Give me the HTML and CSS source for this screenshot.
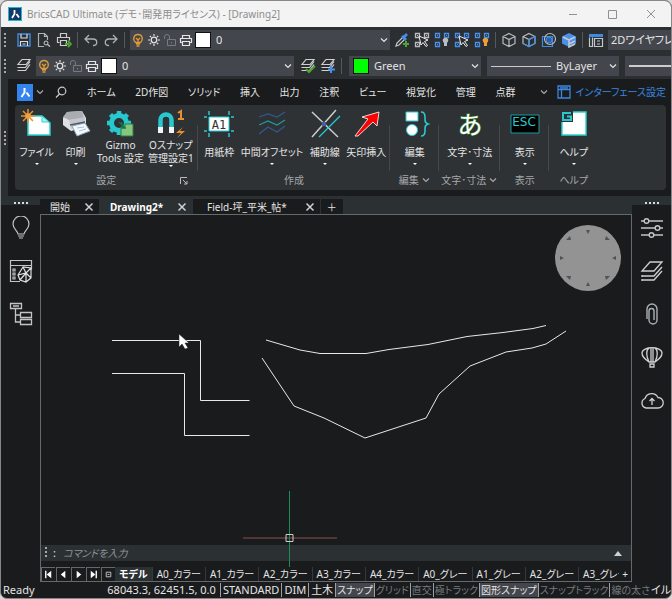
FILE: index.html
```html
<!DOCTYPE html>
<html lang="ja">
<head>
  <meta charset="UTF-8" />
  <meta name="viewport" content="width=device-width, initial-scale=1.0"/>
  <title>BricsCAD Ultimate</title>
  <link rel="stylesheet" href="styles.css">
</head>
<body>
  <!-- 共通アイコン -->
  <svg class="defs" aria-hidden="true">
    <symbol id="i-bulb" viewBox="0 0 14 14"><path d="M4.5 9.5C1 6 3 1.5 7 1.5s6 4.500 2.500 8zM5 11h4M5.500 13h3M5 5l2 2 2-2M7 7v3" fill="none" stroke="#dd9a35" stroke-width="1.300"/></symbol>
    <symbol id="i-sun" viewBox="0 0 14 14"><circle cx="7" cy="7" r="2.800" fill="none" stroke="#e0e0e0" stroke-width="1.300"/><path d="M7 1v2M7 11v2M1 7h2M11 7h2M2.800 2.800l1.300 1.300M9.900 9.900l1.300 1.300M11.200 2.800L9.900 4.100M4.100 9.900l-1.300 1.300" stroke="#e0e0e0" stroke-width="1.200"/></symbol>
    <symbol id="i-lock" viewBox="0 0 14 14"><path d="M4.500 6.500h8v6h-8zM1.500 6V4a2.500 2.500 0 0 1 5 0v2.500M8.500 9v1.500" fill="none" stroke="#777b80"/></symbol>
    <symbol id="i-print" viewBox="0 0 14 14"><path d="M3.500 5V2.500h7V5M3 9.500H1.500v-4h11v4H11M3.500 8.500h7v4h-7z" fill="none" stroke="#e4e4e4" stroke-width="1.200"/></symbol>
    <symbol id="i-chev" viewBox="0 0 10 10"><path d="M2 3.500l3 3 3-3" fill="none" stroke="currentColor" stroke-width="1.200"/></symbol>
    <symbol id="i-close" viewBox="0 0 10 10"><path d="M1.500 1.500l7 7M8.500 1.500l-7 7" fill="none" stroke="#ccd2d8" stroke-width="1.500"/></symbol>
    <symbol id="i-layers" viewBox="0 0 16 16"><path d="M6 1.500h8l-4 5H2zM1.500 9.500h8l4.500-6M1.500 12.500h8l4.500-6" fill="none" stroke="#d0d0d0" stroke-width="1.200"/></symbol>
    <symbol id="i-cube" viewBox="0 0 16 16"><path d="M8 1.500l6 3v7l-6 3-6-3v-7zM2 4.500l6 3 6-3M8 7.500v7" fill="none" stroke="#b9bcc0" stroke-width="1.200"/></symbol>
    <symbol id="i-boxes" viewBox="0 0 16 16"><path d="M1.500 1.500h4v4h-4zM10.500 1.500h4v4h-4zM1.500 10.500h4v4h-4z" fill="none" stroke="currentColor" stroke-width="1.300"/><path d="M3 3h1v1H3zM12 3h1v1h-1zM3 12h1v1H3z" fill="currentColor"/></symbol>
    <symbol id="i-arrow" viewBox="0 0 16 16"><path d="M5 4l9 4-3.500 1.500 3 4-1.500 1-3-4L7 13z" fill="#2b2f32" stroke="#eee"/></symbol>
  </svg>

  <div class="window">
    <!-- タイトルバー -->
    <header class="titlebar">
      <svg class="app-icon" width="14" height="14" viewBox="0 0 14 14"><path d="M0 0h14v14H0z" fill="#123a66"/><path d="M0 0h14v14H0z" fill="none" stroke="#25b4d8" stroke-width="2"/><path d="M6.500 3v4L4 11M8.500 7l2.500 3.500" fill="none" stroke="#fff" stroke-width="1.800"/></svg>
      <h1>BricsCAD Ultimate (デモ･開発用ライセンス) - [Drawing2]</h1>
      <div class="window-buttons">
        <button aria-label="最小化"><svg width="10" height="10"><path d="M1 5.500h8" stroke="#909090"/></svg></button>
        <button aria-label="最大化"><svg width="10" height="10"><path d="M1.500 1.500h8v8h-8z" fill="none" stroke="#909090"/></svg></button>
        <button aria-label="閉じる"><svg width="10" height="10"><path d="M1 1l8 8M9 1l-8 8" stroke="#909090"/></svg></button>
      </div>
    </header>

    <!-- ツールバー 1段目 -->
    <div class="toolbar">
      <span class="grip"></span>
      <button aria-label="保存"><svg viewBox="0 0 16 16"><path d="M2 2h12v12H2z" fill="none" stroke="#3f8be0" stroke-width="1.400"/><path d="M5 2v4h6V2M4.500 14V9.500h7V14M6.500 12h3" fill="none" stroke="#ddd" stroke-width="1.200"/></svg></button>
      <button aria-label="印刷プレビュー"><svg viewBox="0 0 16 16"><path d="M8 14.500H2.500v-13h6l3 3V8M8.500 1.500v3h3" fill="none" stroke="#aeb1b4" stroke-width="1.200"/><circle cx="10" cy="11" r="2" fill="none" stroke="#ccc"/><path d="M11.500 12.500l2.500 2" stroke="#ccc" stroke-width="1.300"/></svg></button>
      <button aria-label="印刷"><svg viewBox="0 0 16 16"><path d="M4.500 6V1.500h6V6M3.500 10.500h-2v-5h12v3M4.500 8.500h6v5h-6z" fill="none" stroke="#ccc" stroke-width="1.200"/><path d="M9 12h4M12 9l3 3-3 3" fill="none" stroke="#4ea72c" stroke-width="1.800"/></svg></button>
      <span class="sep"></span>
      <button aria-label="元に戻す"><svg viewBox="0 0 16 16"><path d="M6 3L2 7l4 4M2 7h8c5 0 5 6.500 0 6.500" fill="none" stroke="#aeb1b4" stroke-width="1.300"/></svg></button>
      <button aria-label="やり直し"><svg viewBox="0 0 16 16"><path d="M10 3l4 4-4 4M14 7H6c-5 0-5 6.500 0 6.500" fill="none" stroke="#aeb1b4" stroke-width="1.300"/></svg></button>
      <span class="sep"></span>
      <div class="combo layer">
        <svg><use href="#i-bulb"/></svg><svg><use href="#i-sun"/></svg><svg><use href="#i-lock"/></svg><svg><use href="#i-print"/></svg>
        <span class="swatch"></span>
        <select aria-label="画層"><option>0</option></select>
        <svg class="chev"><use href="#i-chev"/></svg>
      </div>
      <button aria-label="プロパティコピー"><svg viewBox="0 0 16 16"><path d="M2 14l1-3 6-6 2 2-6 6z" fill="none" stroke="#c4c7ca" stroke-width="1.200"/><path d="M8 4l4 4M10 5l3-3" stroke="#4a90e8" stroke-width="2.600"/><path d="M12 9v6M9 12h6" stroke="#4ea72c" stroke-width="2"/></svg></button>
      <button aria-label="選択"><svg class="gray" viewBox="0 0 16 16"><use href="#i-boxes"/><use href="#i-arrow"/></svg></button>
      <button aria-label="選択を非表示"><svg class="blue" viewBox="0 0 16 16"><use href="#i-boxes"/><path d="M10 11C7.500 8 9 6 11.500 6S15.500 8 13 11v3h-3z" fill="#b9bcc0"/></svg></button>
      <button aria-label="選択を分離"><svg class="blue" viewBox="0 0 16 16"><use href="#i-boxes"/><use href="#i-arrow"/></svg></button>
      <button aria-label="すべて表示"><svg class="blue" viewBox="0 0 16 16"><use href="#i-boxes"/><path d="M10 11C7.500 8 9 6 11.500 6S15.500 8 13 11v3h-3z" fill="#e8a03a"/></svg></button>
      <span class="sep"></span>
      <button aria-label="ワイヤフレーム"><svg><use href="#i-cube"/></svg></button>
      <button aria-label="隠線"><svg viewBox="0 0 16 16"><use href="#i-cube"/><path d="M8 14.500l6-3v-7l-6 3zM2 11.500l6 3" fill="none" stroke="#3f8be0" stroke-width="1.200"/></svg></button>
      <button aria-label="X線"><svg viewBox="0 0 16 16"><path d="M1.500 4.500h10v10h-10z" fill="none" stroke="#3f8be0" stroke-width="1.200"/><circle cx="9" cy="7" r="5.500" fill="none" stroke="#b9bcc0" stroke-width="1.200"/><circle cx="8" cy="8" r="3" fill="#2c5fa8" stroke="#4a90e8"/></svg></button>
      <button aria-label="シェーディング"><svg viewBox="0 0 16 16"><path d="M8 1l7 3.500v7L8 15l-7-3.500v-7z" fill="#4a90e8"/><path d="M2 5l6 3 6-3M8 12l6-3M8 8v7l6-3" fill="none" stroke="#c0c8d0" stroke-width="1.600"/></svg></button>
      <span class="sep"></span>
      <button aria-label="パネル"><svg viewBox="0 0 16 16"><path d="M1 2h14v3H1z" fill="#3f8be0"/><path d="M1.500 5.500v9h3v-9M6.500 6.500h8v8h-8zM9 9h3M9 12h3" fill="none" stroke="#c4c7ca" stroke-width="1.200"/></svg></button>
      <div class="combo style"><select aria-label="表示スタイル"><option>2Dワイヤフレーム</option></select></div>
    </div>

    <!-- ツールバー 2段目 -->
    <div class="toolbar">
      <span class="grip"></span>
      <button aria-label="画層管理"><svg><use href="#i-layers"/></svg></button>
      <div class="combo layer">
        <svg><use href="#i-bulb"/></svg><svg><use href="#i-sun"/></svg><svg><use href="#i-lock"/></svg><svg><use href="#i-print"/></svg>
        <span class="swatch"></span>
        <select aria-label="現在の画層"><option>0</option></select>
        <svg class="chev"><use href="#i-chev"/></svg>
      </div>
      <button class="first" aria-label="現在画層に設定"><svg viewBox="0 0 16 16"><use href="#i-layers"/><path d="M6 11l3 3 6-6" fill="none" stroke="#4ea72c" stroke-width="2"/></svg></button>
      <button aria-label="画層追加"><svg viewBox="0 0 16 16"><use href="#i-layers"/><path d="M11 8v7M8 11.500h7" stroke="#4a90e8" stroke-width="2"/></svg></button>
      <span class="sep"></span>
      <div class="combo property">
        <span class="swatch green"></span>
        <select aria-label="色"><option>Green</option></select>
        <svg class="chev"><use href="#i-chev"/></svg>
      </div>
      <div class="combo property">
        <span class="line"></span>
        <select class="linetype" aria-label="線種"><option>ByLayer</option></select>
        <svg class="chev"><use href="#i-chev"/></svg>
      </div>
      <div class="combo weight"><span class="line thick"></span></div>
    </div>

    <!-- リボン -->
    <div class="ribbon">
      <div class="ribbon-grip"><span class="grip"></span></div>
      <div class="ribbon-body">
        <nav class="ribbon-tabs">
          <button class="logo" aria-label="BricsCAD"><svg width="16" height="17" viewBox="0 0 16 17"><path d="M7.500 4v4.500L4.500 13M9.500 8.500l3 4" fill="none" stroke="#fff" stroke-width="2"/></svg></button>
          <button class="more" aria-label="メニュー"><svg width="10" height="10"><use href="#i-chev"/></svg></button>
          <button class="search" aria-label="検索"><svg width="12" height="12" viewBox="0 0 12 12"><circle cx="7" cy="5" r="3.800" fill="none" stroke="#ccc" stroke-width="1.200"/><path d="M4.500 8L1 11.500" stroke="#ccc" stroke-width="1.200"/></svg></button>
          <div class="tab-list">
            <a href="#">ホーム</a>
            <a href="#">2D作図</a>
            <a href="#">ソリッド</a>
            <a href="#">挿入</a>
            <a href="#">出力</a>
            <a href="#">注釈</a>
            <a href="#">ビュー</a>
            <a href="#">視覚化</a>
            <a href="#">管理</a>
            <a href="#">点群</a>
          </div>
          <button class="more" aria-label="その他のタブ"><svg width="10" height="10"><use href="#i-chev"/></svg></button>
          <a class="interface" href="#"><svg width="14" height="14" viewBox="0 0 14 14"><path d="M1 1h12v12H1zM1 4.500h12M4.500 4.500V13M3 2.800h8" fill="none" stroke="#3b86e0" stroke-width="1.300"/></svg>インターフェース設定</a>
        </nav>
        <div class="panels">
          <section class="panel">
            <div class="tools">
              <button><svg viewBox="0 0 32 30"><path d="M7 7h14l8 7v12H7z" fill="#fff" stroke="#27d3d0" stroke-width="1.500"/><path d="M21 7v6h7z" fill="#b9eef0" stroke="#27d3d0"/><path d="M7 0v4M7 10v4M0 7h4M10 7h4M2 2l3 3M9 9l3 3M12 2L9 5M5 9l-3 3" stroke="#e8902f" stroke-width="1.500"/><circle cx="7" cy="7" r="3" fill="#f0a03c"/></svg><span>ファイル</span><i class="drop"></i></button>
              <button><svg viewBox="0 0 32 30"><path d="M7 3l15-1 4 7v9l-15 4-8-6V9z" fill="#dfe0e4"/><path d="M7 3l15-1 2 7-15 2-6-3z" fill="#a9acb3"/><path d="M9 11l16-3v8l-14 4z" fill="#c5c7ce"/><path d="M12 17l13-3 5 8-13 5z" fill="#f4f8fb" stroke="#8ea2b8"/><path d="M10 16l15-3" stroke="#555b66" stroke-width="1.500"/><path d="M17 19l7-1M19 22l7-2" stroke="#9ec5e6"/></svg><span>印刷</span><i class="drop"></i></button>
              <button class="two-line"><svg viewBox="0 0 32 30"><circle cx="15" cy="14" r="7.500" fill="none" stroke="#27c9cf" stroke-width="5"/><path d="M15 2v4M15 22v4M3 14h4M23 14h4M6.500 5.500l3 3M20.500 19.500l3 3M23.500 5.500l-3 3M6.500 22.500l3-3" stroke="#27c9cf" stroke-width="4.500"/><path d="M17 27V18h4v-3h8v12z" fill="#86c77f" stroke="#337a3c"/><path d="M15 13l6 6M18 13v6h4" fill="none" stroke="#174" stroke-width="1.300"/></svg><span>Gizmo<br>Tools 設定</span></button>
              <button class="two-line"><svg viewBox="0 0 32 30"><path d="M5.500 23V11a5.500 5.500 0 0 1 11 0v12" fill="none" stroke="#27c9cf" stroke-width="4.500"/><path d="M3 18h5v6H3zM14 18h5v6h-5z" fill="#f4f4f4"/><path d="M23 4l3-2v8M23 10h6" fill="none" stroke="#e8902f" stroke-width="2"/><path d="M28 18l-7 6h5l-4 5 8-7h-5z" fill="#e8902f"/></svg><span>Oスナップ<br>管理設定1</span><i class="drop"></i></button>
            </div>
            <h2>設定<svg class="launcher" width="9" height="9" viewBox="0 0 9 9"><path d="M1.500 8V1.500H8M4 4l4 4M8 5v3H5" fill="none" stroke="#bbb"/></svg></h2>
          </section>
          <section class="panel">
            <div class="tools">
              <button><svg viewBox="0 0 32 30"><path d="M6 8h20v14H6z" fill="#fff" stroke="#27c9cf"/><path d="M6 2v4M26 2v4M6 24v4M26 24v4M1 8h3M28 8h3M1 22h3M28 22h3" stroke="#27c9cf" stroke-width="1.500"/><text x="16" y="20" text-anchor="middle" class="a1">A1</text></svg><span>用紙枠</span></button>
              <button><svg viewBox="0 0 32 30"><path d="M3 8l9-3 9 3 8-5" fill="none" stroke="#35578f" stroke-width="1.200"/><path d="M3 16l9-4 9 4 8-5" fill="none" stroke="#1f9aa0" stroke-width="1.200"/><path d="M3 25l9-7 9 5 8-6" fill="none" stroke="#35578f" stroke-width="1.200"/></svg><span>中間オフセット</span><i class="drop"></i></button>
              <button><svg viewBox="0 0 32 30"><path d="M3 3l26 25M27 1L3 28" stroke="#ccc" stroke-width="1.500"/><path d="M31 7L10 28" stroke="#27c9cf" stroke-width="1.200"/><path d="M13 13h4v4h-4z" fill="#3f63a8"/></svg><span>補助線</span><i class="drop"></i></button>
              <button><svg viewBox="0 0 32 30"><path d="M5 27L18 10l-6-2 17-5-2 14-4-4L8 27z" fill="#f00" stroke="#ddd"/></svg><span>矢印挿入</span></button>
            </div>
            <h2>作成</h2>
          </section>
          <section class="panel">
            <div class="tools">
              <button><svg viewBox="0 0 32 30"><path d="M7 3h12v9H7z" fill="#fff" stroke="#27c9cf"/><circle cx="13" cy="21" r="5.500" fill="#fff" stroke="#27c9cf"/><path d="M22 3q4 0 4 5v3q0 3 3 4-3 1-3 4v3q0 5-4 5" fill="none" stroke="#27c9cf" stroke-width="1.600"/></svg><span>編集</span><i class="drop"></i></button>
            </div>
            <h2>編集<svg width="10" height="10"><use href="#i-chev"/></svg></h2>
          </section>
          <section class="panel">
            <div class="tools">
              <button><svg viewBox="0 0 32 30"><text x="16" y="25" text-anchor="middle" class="kana">あ</text></svg><span>文字･寸法</span><i class="drop"></i></button>
            </div>
            <h2>文字･寸法<svg width="10" height="10"><use href="#i-chev"/></svg></h2>
          </section>
          <section class="panel">
            <div class="tools">
              <button><svg viewBox="0 0 32 30"><path d="M2 6h28v18H2z" fill="#000" stroke="#1c9a9e"/><text x="15" y="17" text-anchor="middle" class="esc">ESC</text></svg><span>表示</span><i class="drop"></i></button>
            </div>
            <h2>表示</h2>
          </section>
          <section class="panel">
            <div class="tools">
              <button><svg viewBox="0 0 32 30"><path d="M4 3h24v23H4z" fill="#fff" stroke="#27d3d0" stroke-width="1.400"/><path d="M3 2h12v11H3z" fill="#2e3235"/><path d="M13 4H5v7h8V7.500H9" fill="none" stroke="#27c9cf" stroke-width="2"/></svg><span>ヘルプ</span><i class="drop"></i></button>
            </div>
            <h2>ヘルプ</h2>
          </section>
        </div>
      </div>
    </div>

    <!-- 作図エリア -->
    <div class="workspace">
      <aside class="dock left">
        <span class="dock-grip"></span>
        <button aria-label="ヒント"><svg viewBox="0 0 24 24"><path d="M9 18c0-3-5-5-5-10a8 8 0 0 1 16 0c0 5-5 7-5 10zM9 20h6M10 22h4" fill="none" stroke="#c4c4c4" stroke-width="1.200"/></svg></button>
        <button aria-label="コンテンツ"><svg viewBox="0 0 24 24"><path d="M11 22.500H1.500v-21h21v9M1.500 6.500h21M4 10h2v2H4zM4 14h2v2H4zM4 18h2v2H4z" fill="none" stroke="#c4c4c4" stroke-width="1.200"/><path d="M14 8l-5 8 2 5 6 2 5-4V9zM14 8l3 6 5-5M9 16l8-2 5 5M17 14v9M11 21l6-7" fill="none" stroke="#e0e0e0" stroke-width="1.200"/></svg></button>
        <button aria-label="構造"><svg viewBox="0 0 24 24"><path d="M1.500 1.500h11v5h-11zM11.500 10.500h11v5h-11zM11.500 17.500h11v5h-11zM6.500 7v13h5M6.500 13h5M4 4h6" fill="none" stroke="#c4c4c4" stroke-width="1.300"/></svg></button>
      </aside>

      <main class="document">
        <div class="doc-tabs">
          <div class="doc-tab"><a href="#">開始</a><button aria-label="開始を閉じる"><svg><use href="#i-close"/></svg></button></div>
          <div class="doc-tab active"><a href="#">Drawing2*</a><button aria-label="Drawing2を閉じる"><svg><use href="#i-close"/></svg></button></div>
          <div class="doc-tab field"><a href="#">Field-坪_平米_帖*</a><button aria-label="Fieldを閉じる"><svg><use href="#i-close"/></svg></button></div>
          <button class="add" aria-label="新規">＋</button>
        </div>
        <div class="canvas">
          <svg class="drawing">
            <g fill="none" stroke="#e8e8e8">
              <path d="M71 125.500h88.500v60h49M71 158.500h72.500v62h65"/>
              <path d="M225 125l34 10 20 3.500h46l23-4 39-5 39-8 36-4 30-4 13-3"/>
              <path d="M221 143l32 48 30 12 41 20 61-20 13-24 31-28 36-14 26-4 14-4 20-13"/>
            </g>
            <path d="M202 323h94" stroke="#8f5050"/>
            <path d="M248.500 276v76" stroke="#1f8a5c"/>
            <path d="M245 319.500h7v7h-7z" fill="none" stroke="#ccc"/>
            <path d="M138 119v13l3-3 3 5 3-1-3-5h4z" fill="#fff" stroke="#222" stroke-width="0.500"/>
          </svg>
          <svg class="look-from" viewBox="0 0 68 68">
            <circle cx="34" cy="34" r="33" fill="#939393"/>
            <g fill="#505256">
              <path d="M32 6h4l-2 4zM32 62h4l-2-4zM6 32v4l4-2zM62 32v4l-4-2z"/>
              <path d="M12 16h5l-1-4zM56 16h-5l1-4zM12 52h5l-1 4zM56 52h-5l1 4z"/>
            </g>
          </svg>
        </div>
        <div class="command">
          <span class="grip"></span><label for="cmd">:</label>
          <input id="cmd" type="text" placeholder="コマンドを入力">
          <button aria-label="履歴"><svg width="8" height="5" viewBox="0 0 8 5"><path d="M0 5l4-5 4 5z" fill="#d0d0d0"/></svg></button>
        </div>
        <div class="sheets">
          <div class="sheet-nav">
            <button aria-label="最初"><svg viewBox="0 0 12 12"><path d="M3 2v8" stroke="#fff" stroke-width="1.500"/><path d="M9 2v8L4 6z" fill="#fff"/></svg></button>
            <button aria-label="前"><svg viewBox="0 0 12 12"><path d="M8 2v8L3 6z" fill="#fff"/></svg></button>
            <button aria-label="次"><svg viewBox="0 0 12 12"><path d="M4 2v8l5-4z" fill="#fff"/></svg></button>
            <button aria-label="最後"><svg viewBox="0 0 12 12"><path d="M9 2v8" stroke="#fff" stroke-width="1.500"/><path d="M3 2v8l5-4z" fill="#fff"/></svg></button>
            <button aria-label="一覧"><svg viewBox="0 0 12 12"><path d="M3.500 3.500h5v5h-5zM5 6h2" fill="none" stroke="#ccc"/></svg></button>
          </div>
          <div class="sheet-list">
            <a class="active" href="#">モデル</a>
            <a href="#">A0_カラー</a>
            <a href="#">A1_カラー</a>
            <a href="#">A2_カラー</a>
            <a href="#">A3_カラー</a>
            <a href="#">A4_カラー</a>
            <a href="#">A0_グレー</a>
            <a href="#">A1_グレー</a>
            <a href="#">A2_グレー</a>
            <a href="#">A3_グレー</a>
          </div>
          <button class="add-sheet" aria-label="レイアウト追加">+</button>
        </div>
      </main>

      <aside class="dock right">
        <span class="dock-grip"></span>
        <button aria-label="プロパティ"><svg viewBox="0 0 24 24"><path d="M1 5h3M9 5h14M1 12h14M20 12h3M1 19h8M14 19h9" stroke="#c4c4c4" stroke-width="1.400"/><g fill="none" stroke="#c4c4c4" stroke-width="1.400"><circle cx="6.500" cy="5" r="2.300"/><circle cx="17.500" cy="12" r="2.300"/><circle cx="11.500" cy="19" r="2.300"/></g></svg></button>
        <button aria-label="画層"><svg viewBox="0 0 24 24"><path d="M10 3h12l-8 9H2zM2 17h12l8-9M2 21h12l8-9M2 16v2M2 20v2" fill="none" stroke="#d0d0d0" stroke-width="1.300"/></svg></button>
        <button aria-label="添付"><svg viewBox="0 0 24 24"><path d="M7 17V7a5 5 0 0 1 10 0v11a4 4 0 0 1-8 0V9a2.500 2.500 0 0 1 5 0v9" fill="none" stroke="#a9b0b6" stroke-width="1.400"/></svg></button>
        <button aria-label="バルーン"><svg viewBox="0 0 24 24"><path d="M9 17C5 14 2 12 2 8c0-7 20-7 20 0 0 4-3 6-7 9zM9 17C6 11 6 5 9 3M15 17c3-6 3-12 0-14M11 17V3M13 17V3M10 19h4v3h-4z" fill="none" stroke="#d0d0d0" stroke-width="1.300"/></svg></button>
        <button aria-label="クラウド"><svg viewBox="0 0 24 24"><path d="M6 20a5 5 0 0 1-1-9.500 7 7 0 0 1 13-1A5.200 5.200 0 0 1 18 20zM12 17v-6M9.500 13l2.500-2.500 2.500 2.500" fill="none" stroke="#d0d0d0" stroke-width="1.300"/></svg></button>
      </aside>
    </div>

    <!-- ステータスバー -->
    <footer class="status">
      <span class="ready">Ready</span>
      <span class="coords">68043.3, 62451.5, 0.0</span>
      <button>STANDARD</button>
      <button>DIM</button>
      <button>土木</button>
      <button class="on">スナップ</button>
      <button class="off">グリッド</button>
      <button class="off">直交</button>
      <button class="off">極トラック</button>
      <button class="on">図形スナップ</button>
      <button class="off">スナップトラック</button>
      <button class="off">線の太さ</button>
      <span class="tile">イル</span>
    </footer>
  </div>
</body>
</html>
```

FILE: styles.css
```css
* {
  box-sizing: border-box;
}
body {
  margin: 0;
  background: #d8d8d8;
  color: #e4e4e4;
  font-family: "Noto Sans", "Noto Sans CJK JP", sans-serif;
  font-size: 11px;
  line-height: 14px;
  font-feature-settings: "palt";
}
button, select, input {
  font: inherit;
  color: inherit;
  background: none;
  border: 0;
  padding: 0;
  margin: 0;
  font-feature-settings: inherit;
}
a {
  color: inherit;
  text-decoration: none;
  white-space: nowrap;
}
svg {
  flex-shrink: 0;
}
.defs {
  position: absolute;
  width: 0;
  height: 0;
}
.window {
  display: flex;
  flex-direction: column;
  height: 100vh;
  background: #191b1d;
  border: 1px solid #85888a;
  border-radius: 7px;
  overflow: hidden;
}
/* --- タイトルバー --- */
.titlebar {
  display: flex;
  align-items: center;
  gap: 5px;
  height: 26px;
  padding: 0 15px 0 7px;
  background: #f3f3f3;
  color: #8d8d8d;
}
.titlebar h1 {
  margin: 0;
  flex: 1;
  font-size: 10px;
  font-weight: 400;
  white-space: nowrap;
}
.window-buttons {
  display: flex;
  gap: 29px;
}
.window-buttons button, .window-buttons svg {
  display: block;
}
/* --- ツールバー --- */
.toolbar {
  display: flex;
  align-items: center;
  gap: 4px;
  height: 26px;
  padding-left: 3px;
  background: #2b2f32;
}
.toolbar button {
  width: 16px;
  height: 16px;
  flex-shrink: 0;
}
.toolbar button svg {
  display: block;
  width: 16px;
  height: 16px;
}
.toolbar .first {
  margin-left: 2px;
}
.grip {
  width: 2px;
  height: 14px;
  margin-right: 6px;
  flex-shrink: 0;
  background: repeating-linear-gradient(#a8a8a8 0 2px, transparent 2px 4px);
}
.sep {
  width: 1px;
  height: 16px;
  margin: 0 1px;
  background: #55595d;
}
.gray {
  color: #b9bcc0;
}
.blue {
  color: #4a90e8;
}
.combo {
  display: flex;
  align-items: center;
  gap: 2px;
  height: 20px;
  min-width: 0;
  background: #43464d;
  overflow: hidden;
}
.combo svg {
  width: 14px;
  height: 14px;
}
.combo .chev {
  width: 10px;
  height: 10px;
  margin-right: 1px;
}
.combo select {
  flex: 1;
  min-width: 0;
  appearance: none;
  padding-left: 3px;
}
.combo.layer {
  flex: 1;
  padding-left: 1px;
}
.combo.property {
  width: 132px;
  padding-left: 4px;
  margin-left: 2px;
}
.combo.style {
  width: 63px;
  padding: 0;
}
.combo.weight {
  width: 46px;
  padding-left: 4px;
  margin-left: 2px;
}
.swatch {
  width: 16px;
  height: 16px;
  background: #fff;
  border: 1px solid #111;
  flex-shrink: 0;
}
.swatch.green {
  background: #00ff00;
}
.line {
  width: 60px;
  height: 1px;
  background: #ccc;
  flex-shrink: 0;
}
.line.thick {
  height: 2px;
}
/* --- リボン --- */
.ribbon {
  display: flex;
  height: 117px;
  font-size: 10px;
}
.ribbon-grip {
  display: flex;
  align-items: center;
  width: 7px;
  padding-left: 3px;
  background: #2b2f32;
}
.ribbon-body {
  flex: 1;
  min-width: 0;
  padding: 0 5px 0 7px;
}
.ribbon-tabs {
  display: flex;
  align-items: center;
  height: 26px;
}
.logo {
  width: 16px;
  height: 17px;
  margin-left: 2px;
  background: #3384ec;
}
.logo svg, .more svg, .search svg {
  display: block;
}
.more {
  margin: 0 2px;
  color: #aaa;
}
.search {
  margin: 0 20px 0 8px;
}
.tab-list {
  display: flex;
  flex: 1;
  justify-content: space-between;
  margin-right: 22px;
}
.interface {
  display: flex;
  align-items: center;
  gap: 4px;
  margin-left: 6px;
  color: #3b86e0;
}
.panels {
  display: flex;
  height: 85px;
  background: #2e3235;
  border-radius: 4px;
}
.panel {
  display: flex;
  flex-direction: column;
  min-width: 49px;
  padding: 4px 2px 0;
  background: linear-gradient(#45494c, #45494c) right 20px / 1px 46px no-repeat;
}
.panel:last-child {
  background: none;
}
.tools {
  display: flex;
  justify-content: center;
  flex: 1;
}
.tools button {
  display: flex;
  flex-direction: column;
  align-items: center;
  min-width: 39px;
  padding: 0 2px;
  white-space: nowrap;
}
.tools svg {
  width: 32px;
  height: 30px;
  margin-bottom: 6px;
  overflow: visible;
}
.tools .two-line {
  line-height: 13px;
}
.two-line svg {
  margin-bottom: 0;
}
.drop {
  margin-top: 4px;
  border: 2px solid transparent;
  border-top-color: #fff;
}
.two-line .drop {
  margin-top: 0;
}
.panel h2 {
  display: flex;
  justify-content: center;
  align-items: center;
  gap: 2px;
  margin: 0;
  font-size: 10px;
  line-height: 20px;
  font-weight: 400;
  color: #a5a8aa;
  white-space: nowrap;
}
.launcher {
  position: absolute;
  right: 8px;
}
.panel h2:has(.launcher) {
  position: relative;
}
.a1 {
  font: 12px "DejaVu Sans Mono", monospace;
  fill: #333;
}
.kana {
  font: 25px "Noto Sans CJK JP", sans-serif;
  fill: #fff;
  stroke: #3f9c35;
  stroke-width: 1px;
  paint-order: stroke;
}
.esc {
  font: 12px "DejaVu Sans", sans-serif;
  fill: #27c9cf;
}
/* --- 作業エリア --- */
.workspace {
  display: flex;
  flex: 1;
  min-height: 0;
  background: #2b3033;
}
.dock {
  display: flex;
  flex-direction: column;
  align-items: center;
  width: 39px;
  background: linear-gradient(#2b3033 9px, #191b1d 9px);
}
.dock-grip {
  width: 14px;
  height: 2px;
  margin: 6px 0 12px;
  background: repeating-linear-gradient(90deg, #ddd 0 2px, transparent 2px 4px);
}
.dock button {
  width: 24px;
  height: 24px;
  margin-bottom: 19px;
}
.dock svg {
  display: block;
}
.document {
  display: flex;
  flex-direction: column;
  flex: 1;
  min-width: 0;
}
.doc-tabs {
  display: flex;
  gap: 1px;
  height: 18px;
  padding-top: 3px;
  font-size: 10px;
}
.doc-tab {
  display: flex;
  align-items: center;
  gap: 14px;
  padding: 0 5px 0 10px;
  background: #191b1d;
}
.doc-tab.active {
  background: #2b3033;
  font-weight: 700;
  color: #fff;
}
.doc-tab.field {
  gap: 18px;
  padding-left: 14px;
}
.doc-tab svg {
  display: block;
  width: 10px;
  height: 10px;
}
.add {
  width: 22px;
  background: #191b1d;
}
.canvas {
  position: relative;
  flex: 1;
  min-height: 0;
  background: #191b1d;
  border: 1px solid #66696b;
  border-bottom: 0;
}
.drawing {
  display: block;
  width: 100%;
  height: 100%;
  overflow: visible;
}
.look-from {
  position: absolute;
  top: 9px;
  right: 9px;
  width: 68px;
  height: 68px;
}
.command {
  display: flex;
  align-items: center;
  height: 16px;
  padding-left: 4px;
  background: #2b3033;
  border: solid #66696b;
  border-width: 0 1px;
}
.command .grip {
  height: 12px;
}
.command input {
  flex: 1;
  min-width: 0;
  padding-left: 7px;
  font-size: 10px;
  font-style: italic;
}
.command input::placeholder {
  color: #909496;
}
.command button {
  display: flex;
  justify-content: center;
  width: 26px;
}
.sheets {
  display: flex;
  align-items: center;
  height: 21px;
  padding-top: 5px;
  background: #191b1d;
  border: 1px solid #66696b;
  border-top: 0;
  font-size: 10px;
}
.sheet-nav {
  display: flex;
  gap: 1px;
}
.sheet-nav button {
  width: 14px;
  height: 14px;
  padding: 0 1px;
  border-left: 1px solid #66696b;
  border-top: 1px solid #66696b;
}
.sheet-nav svg {
  display: block;
}
.sheet-list {
  display: flex;
  flex: 1;
  min-width: 0;
  overflow: hidden;
}
.sheet-list a {
  padding: 0 4px;
  border-right: 1px solid #35393c;
}
.sheet-list .active {
  background: #2b3033;
  font-weight: 700;
  color: #fff;
}
.add-sheet {
  width: 12px;
}
/* --- ステータスバー --- */
.status {
  display: flex;
  align-items: center;
  height: 16px;
  padding-left: 2px;
  white-space: nowrap;
  overflow: hidden;
}
.ready {
  flex: 1;
}
.coords {
  padding-right: 4px;
}
.status button {
  height: 14px;
  padding: 0 2px;
  border-left: 1px solid #a0a0a0;
}
.status .on, .status .off {
  padding: 0 1px;
  font-size: 10px;
}
.status .on {
  background: #43464d;
}
.status .off {
  color: #777b7e;
}
```
